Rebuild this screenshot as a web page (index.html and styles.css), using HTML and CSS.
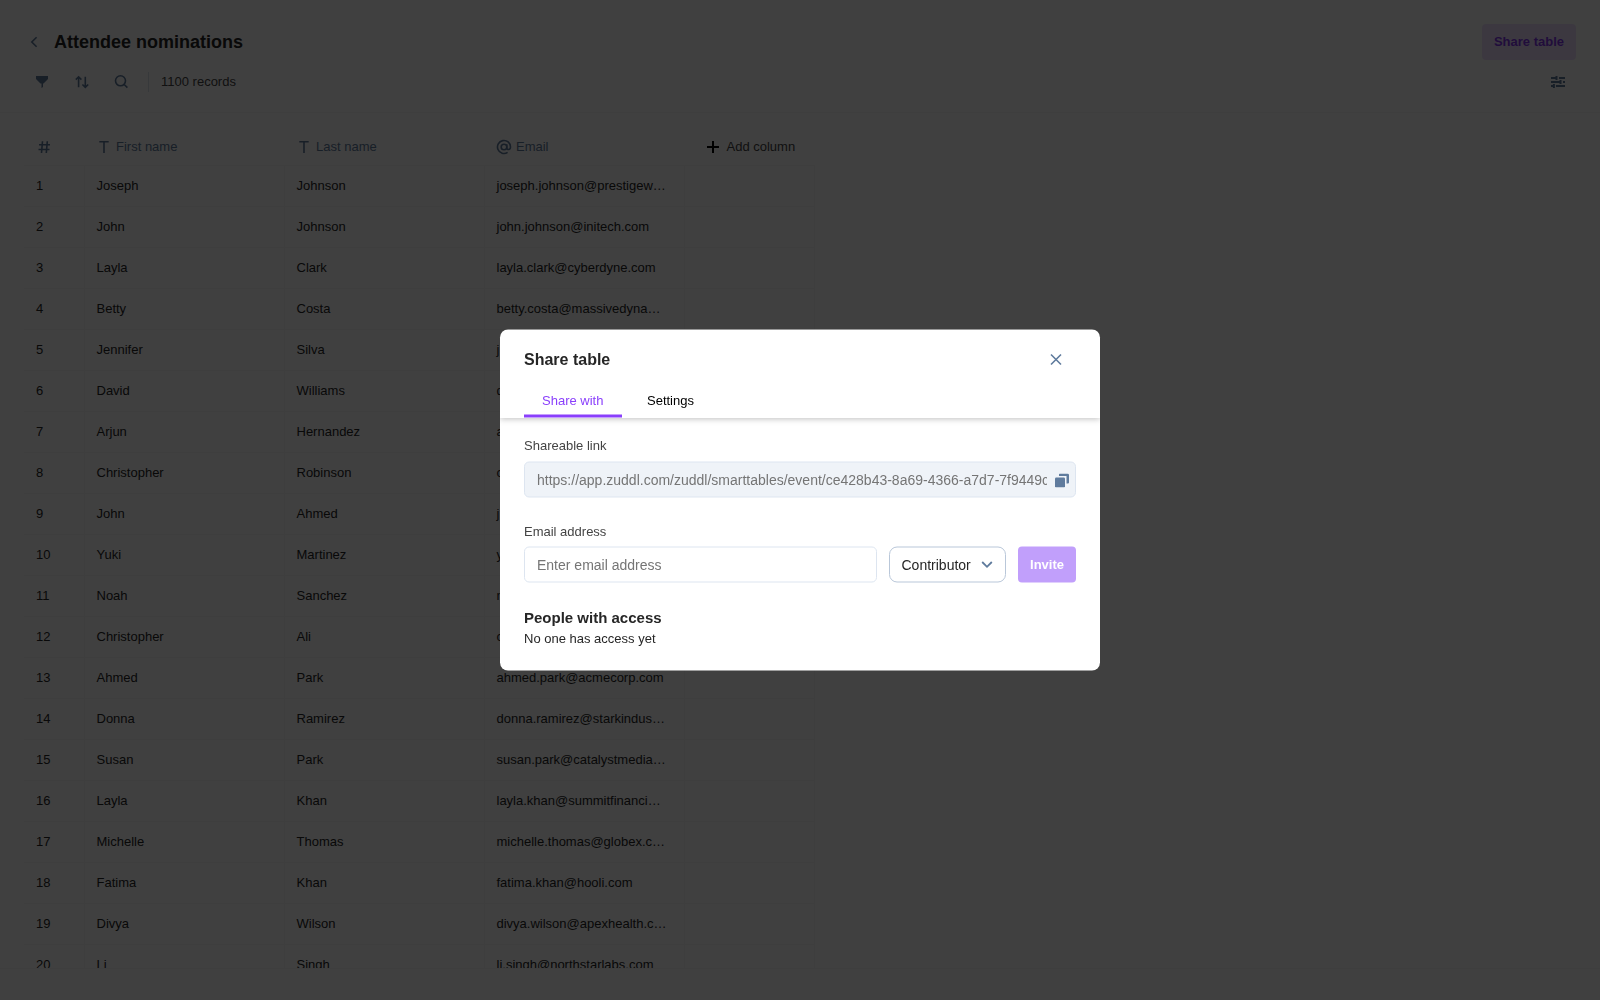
FILE: index.html
```html
<!DOCTYPE html>
<html lang="en">
<head>
<meta charset="UTF-8">
<meta name="viewport" content="width=device-width, initial-scale=1.0">
<title>Attendee nominations</title>
<link rel="stylesheet" href="styles.css">
</head>
<body>
    <div class="page">
        <header class="page-header">
            <div class="title-row">
                <svg class="back" width="16" height="16" viewBox="0 0 16 16"><path d="M10.600 3.200L5.800 8l4.800 4.800"/></svg>
                <h1>Attendee nominations</h1>
                <button class="share-button">Share table</button>
            </div>
            <div class="toolbar">
                <svg class="icon" width="16" height="16" viewBox="0 0 16 16"><path class="solid" d="M2 2h12v3L9.500 9.500H9V13l-1.500 1V9.500H6.500L2 5z"/></svg>
                <svg class="icon" width="16" height="16" viewBox="0 0 16 16"><path d="M4.600 13.300V3M1.800 5.600L4.600 2.800l2.800 2.800M11.300 2.700v10.700M8.400 10.500l2.900 2.900 2.900-2.900"/></svg>
                <svg class="icon" width="16" height="16" viewBox="0 0 16 16"><circle cx="6.500" cy="6.800" r="5"/><path d="M10.200 10.500l3.200 3.100"/></svg>
                <span class="divider"></span>
                <span class="records">1100 records</span>
                <svg class="icon sliders" width="16" height="16" viewBox="0 0 16 16"><path d="M1 4h5M9 4h6M1 8h9M13 8h2M1 12h2M6 12h9M6.500 2v4M10.500 6v4M3.900 10v4"/></svg>
            </div>
        </header>

        <!-- Records -->
        <main class="table-area">
            <div class="row head">
                <div><svg width="16" height="16" viewBox="0 0 16 16"><path d="M3 5.800h11M2.500 10.500h11M6.500 2.300l-1 11.700M11.300 2.300L10.300 14"/></svg></div>
                <div><svg width="16" height="16" viewBox="0 0 16 16"><path d="M3.300 2.800h9.400M8 2.800V14"/></svg>First name</div>
                <div><svg width="16" height="16" viewBox="0 0 16 16"><path d="M3.300 2.800h9.400M8 2.800V14"/></svg>Last name</div>
                <div><svg width="16" height="16" viewBox="0 0 16 16"><circle cx="8" cy="8" r="2.800"/><path d="M10.800 5.200v3.600c0 2.600 3.700 2.200 3.700-.8a6.500 6.500 0 1 0-2.900 5.400"/></svg>Email</div>
                <div class="add"><svg width="16" height="16" viewBox="0 0 16 16"><path d="M8 2v12M2 8h12"/></svg>Add column</div>
            </div>
            <div class="row"><div>1</div><div>Joseph</div><div>Johnson</div><div>joseph.johnson@prestigew…</div><div></div></div>
            <div class="row"><div>2</div><div>John</div><div>Johnson</div><div>john.johnson@initech.com</div><div></div></div>
            <div class="row"><div>3</div><div>Layla</div><div>Clark</div><div>layla.clark@cyberdyne.com</div><div></div></div>
            <div class="row"><div>4</div><div>Betty</div><div>Costa</div><div>betty.costa@massivedyna…</div><div></div></div>
            <div class="row"><div>5</div><div>Jennifer</div><div>Silva</div><div>j</div><div></div></div>
            <div class="row"><div>6</div><div>David</div><div>Williams</div><div>d</div><div></div></div>
            <div class="row"><div>7</div><div>Arjun</div><div>Hernandez</div><div>a</div><div></div></div>
            <div class="row"><div>8</div><div>Christopher</div><div>Robinson</div><div>c</div><div></div></div>
            <div class="row"><div>9</div><div>John</div><div>Ahmed</div><div>j</div><div></div></div>
            <div class="row"><div>10</div><div>Yuki</div><div>Martinez</div><div>y</div><div></div></div>
            <div class="row"><div>11</div><div>Noah</div><div>Sanchez</div><div>n</div><div></div></div>
            <div class="row"><div>12</div><div>Christopher</div><div>Ali</div><div>c</div><div></div></div>
            <div class="row"><div>13</div><div>Ahmed</div><div>Park</div><div>ahmed.park@acmecorp.com</div><div></div></div>
            <div class="row"><div>14</div><div>Donna</div><div>Ramirez</div><div>donna.ramirez@starkindus…</div><div></div></div>
            <div class="row"><div>15</div><div>Susan</div><div>Park</div><div>susan.park@catalystmedia…</div><div></div></div>
            <div class="row"><div>16</div><div>Layla</div><div>Khan</div><div>layla.khan@summitfinanci…</div><div></div></div>
            <div class="row"><div>17</div><div>Michelle</div><div>Thomas</div><div>michelle.thomas@globex.c…</div><div></div></div>
            <div class="row"><div>18</div><div>Fatima</div><div>Khan</div><div>fatima.khan@hooli.com</div><div></div></div>
            <div class="row"><div>19</div><div>Divya</div><div>Wilson</div><div>divya.wilson@apexhealth.c…</div><div></div></div>
            <div class="row"><div>20</div><div>Li</div><div>Singh</div><div>li.singh@northstarlabs.com</div><div></div></div>
        </main>
        <footer class="page-footer"></footer>
    </div>

    <!-- Share dialog -->
    <div class="overlay">
        <div class="modal">
            <div class="modal-header">
                <div class="modal-title">
                    <h2>Share table</h2>
                    <svg width="16" height="16" viewBox="0 0 16 16"><path d="M3 3l10 10M13 3L3 13"/></svg>
                </div>
                <div class="tabs">
                    <div class="tab active">Share with</div>
                    <div class="tab">Settings</div>
                </div>
            </div>
            <div class="modal-body">
                <div class="label">Shareable link</div>
                <div class="link-box">
                    <span class="link">https://app.zuddl.com/zuddl/smarttables/event/ce428b43-8a69-4366-a7d7-7f9449c</span>
                    <svg width="14" height="14" viewBox="0 0 14 14"><path d="M5 0h7.500A1.500 1.500 0 0 1 14 1.500V9a1 1 0 0 1-1 1h-1.500V2.500H4V1a1 1 0 0 1 1-1z"/><rect x="0" y="4" width="10" height="10" rx="1.200"/></svg>
                </div>
                <div class="label email-label">Email address</div>
                <div class="invite-row">
                    <input class="email" type="text" placeholder="Enter email address">
                    <div class="role">Contributor
                        <svg width="12" height="12" viewBox="0 0 12 12"><path d="M1.200 3.500L6 8.300l4.800-4.800"/></svg>
                    </div>
                    <button class="invite">Invite</button>
                </div>
                <h3>People with access</h3>
                <p>No one has access yet</p>
            </div>
        </div>
    </div>
</body>
</html>
```
FILE: styles.css
```css
* {
    box-sizing: border-box;
}

body {
    margin: 0;
    background: white;
    font-family: "Liberation Sans", Arial, sans-serif;
    font-size: 13px;
    line-height: 20px;
    color: #262626;
}

h1, h2, h3, p {
    margin: 0;
}

svg {
    display: block;
    flex: none;
    fill: none;
    stroke: #5f7b9d;
    stroke-width: 1.6;
}

button {
    border: none;
    border-radius: 4px;
    font: bold 13px "Liberation Sans", Arial, sans-serif;
}

.page {
    height: 100vh;
    display: flex;
    flex-direction: column;
    overflow: hidden;
}

.page-header {
    height: 113px;
    padding: 24px 24px 0;
    border-bottom: 1px solid #f5f5f5;
}

.title-row {
    display: flex;
    align-items: center;
    height: 36px;
}

.back {
    margin: 0 12px 0 2px;
}

h1 {
    font-size: 18px;
    line-height: 24px;
    color: #262626;
}

.share-button {
    margin-left: auto;
    width: 94px;
    height: 36px;
    padding: 0 0 2px;
    background: #ede0ff;
    color: #8337ec;
}

.toolbar {
    display: flex;
    align-items: center;
    height: 32px;
    margin-top: 6px;
    padding: 0 10px;
}

.icon {
    margin-right: 24px;
}

.icon .solid {
    fill: #5f7b9d;
    stroke: none;
}

.divider {
    width: 1px;
    height: 20px;
    margin: 0 12px 0 -6px;
    background: #dbe3ec;
}

.records {
    color: #444;
}

.sliders {
    margin: 0 0 0 auto;
    stroke-width: 2;
}

.table-area {
    flex: 1;
    min-height: 0;
    overflow: hidden;
    padding: 12px 24px 0;
}

.row {
    display: grid;
    grid-template-columns: 61px 200px 200px 200px 130px;
    width: 791px;
    height: 41px;
}

.row div {
    display: flex;
    align-items: center;
    padding-left: 11.5px;
    border-right: 1px solid #f6f6f6;
    border-bottom: 1px solid #f6f6f6;
    white-space: nowrap;
}

.row div:first-child {
    padding-left: 12px;
}

.head div {
    gap: 4px;
    padding-top: 4px;
    padding-left: 11px;
    border-right: none;
    color: #5f7b9d;
}

.head .add {
    gap: 6px;
    padding-left: 19.5px;
    color: #444;
}

.add svg {
    stroke: #000;
    stroke-width: 2;
}

.page-footer {
    height: 32px;
    border-top: 1px solid #f5f5f5;
}

.overlay {
    position: fixed;
    inset: 0;
    background: rgba(0, 0, 0, 0.75);
}

.modal {
    position: absolute;
    top: 50%;
    left: 50%;
    transform: translate(-50%, -50%);
    width: 600px;
    height: 341px;
    border-radius: 8px;
    background: white;
    overflow: hidden;
}

.modal-header {
    height: 88px;
    padding: 0 24px;
    box-shadow: 0 1px 6px rgba(0, 0, 0, 0.25);
}

.modal-title {
    display: flex;
    align-items: center;
    justify-content: space-between;
    height: 60px;
    padding-right: 12px;
}

h2 {
    font-size: 16px;
    line-height: 24px;
}

.tabs {
    display: flex;
    gap: 7px;
}

.tab {
    height: 28px;
    padding: 1px 18px 0;
    color: #000;
}

.active {
    width: 98px;
    border-bottom: 3px solid #8a3ffc;
    color: #8a3ffc;
}

.modal-body {
    padding: 18px 24px 0;
}

.label {
    margin-bottom: 6px;
    color: #444;
}

.link-box {
    display: flex;
    align-items: center;
    justify-content: space-between;
    height: 36px;
    padding: 0 6px 0 12px;
    border: 1px solid #dde5f0;
    border-radius: 5px;
    background: #eff3f8;
}

.link-box svg {
    margin-top: 1px;
    fill: #5f7b9d;
    stroke: none;
}

.link {
    width: 510px;
    overflow: hidden;
    white-space: nowrap;
    font-size: 14px;
    color: #757575;
}

.email-label {
    margin: 24px 0 5px;
}

.invite-row {
    display: flex;
    gap: 12px;
}

.email {
    flex: 1;
    min-width: 0;
    height: 36px;
    padding: 0 12px;
    border: 1px solid #dde5f0;
    border-radius: 5px;
    font: 14px "Liberation Sans", Arial, sans-serif;
}

.role {
    display: flex;
    align-items: center;
    justify-content: space-between;
    width: 117px;
    height: 36px;
    padding: 0 12px 0 11.5px;
    border: 1px solid #b9c7d9;
    border-radius: 8px;
    font-size: 14px;
}

.role svg {
    stroke-width: 1.8;
}

.invite {
    width: 58px;
    height: 36px;
    padding: 0 0 2px;
    background: #c19ffb;
    color: white;
}

h3 {
    margin: 25px 0 1px;
    font-size: 15px;
}
```
